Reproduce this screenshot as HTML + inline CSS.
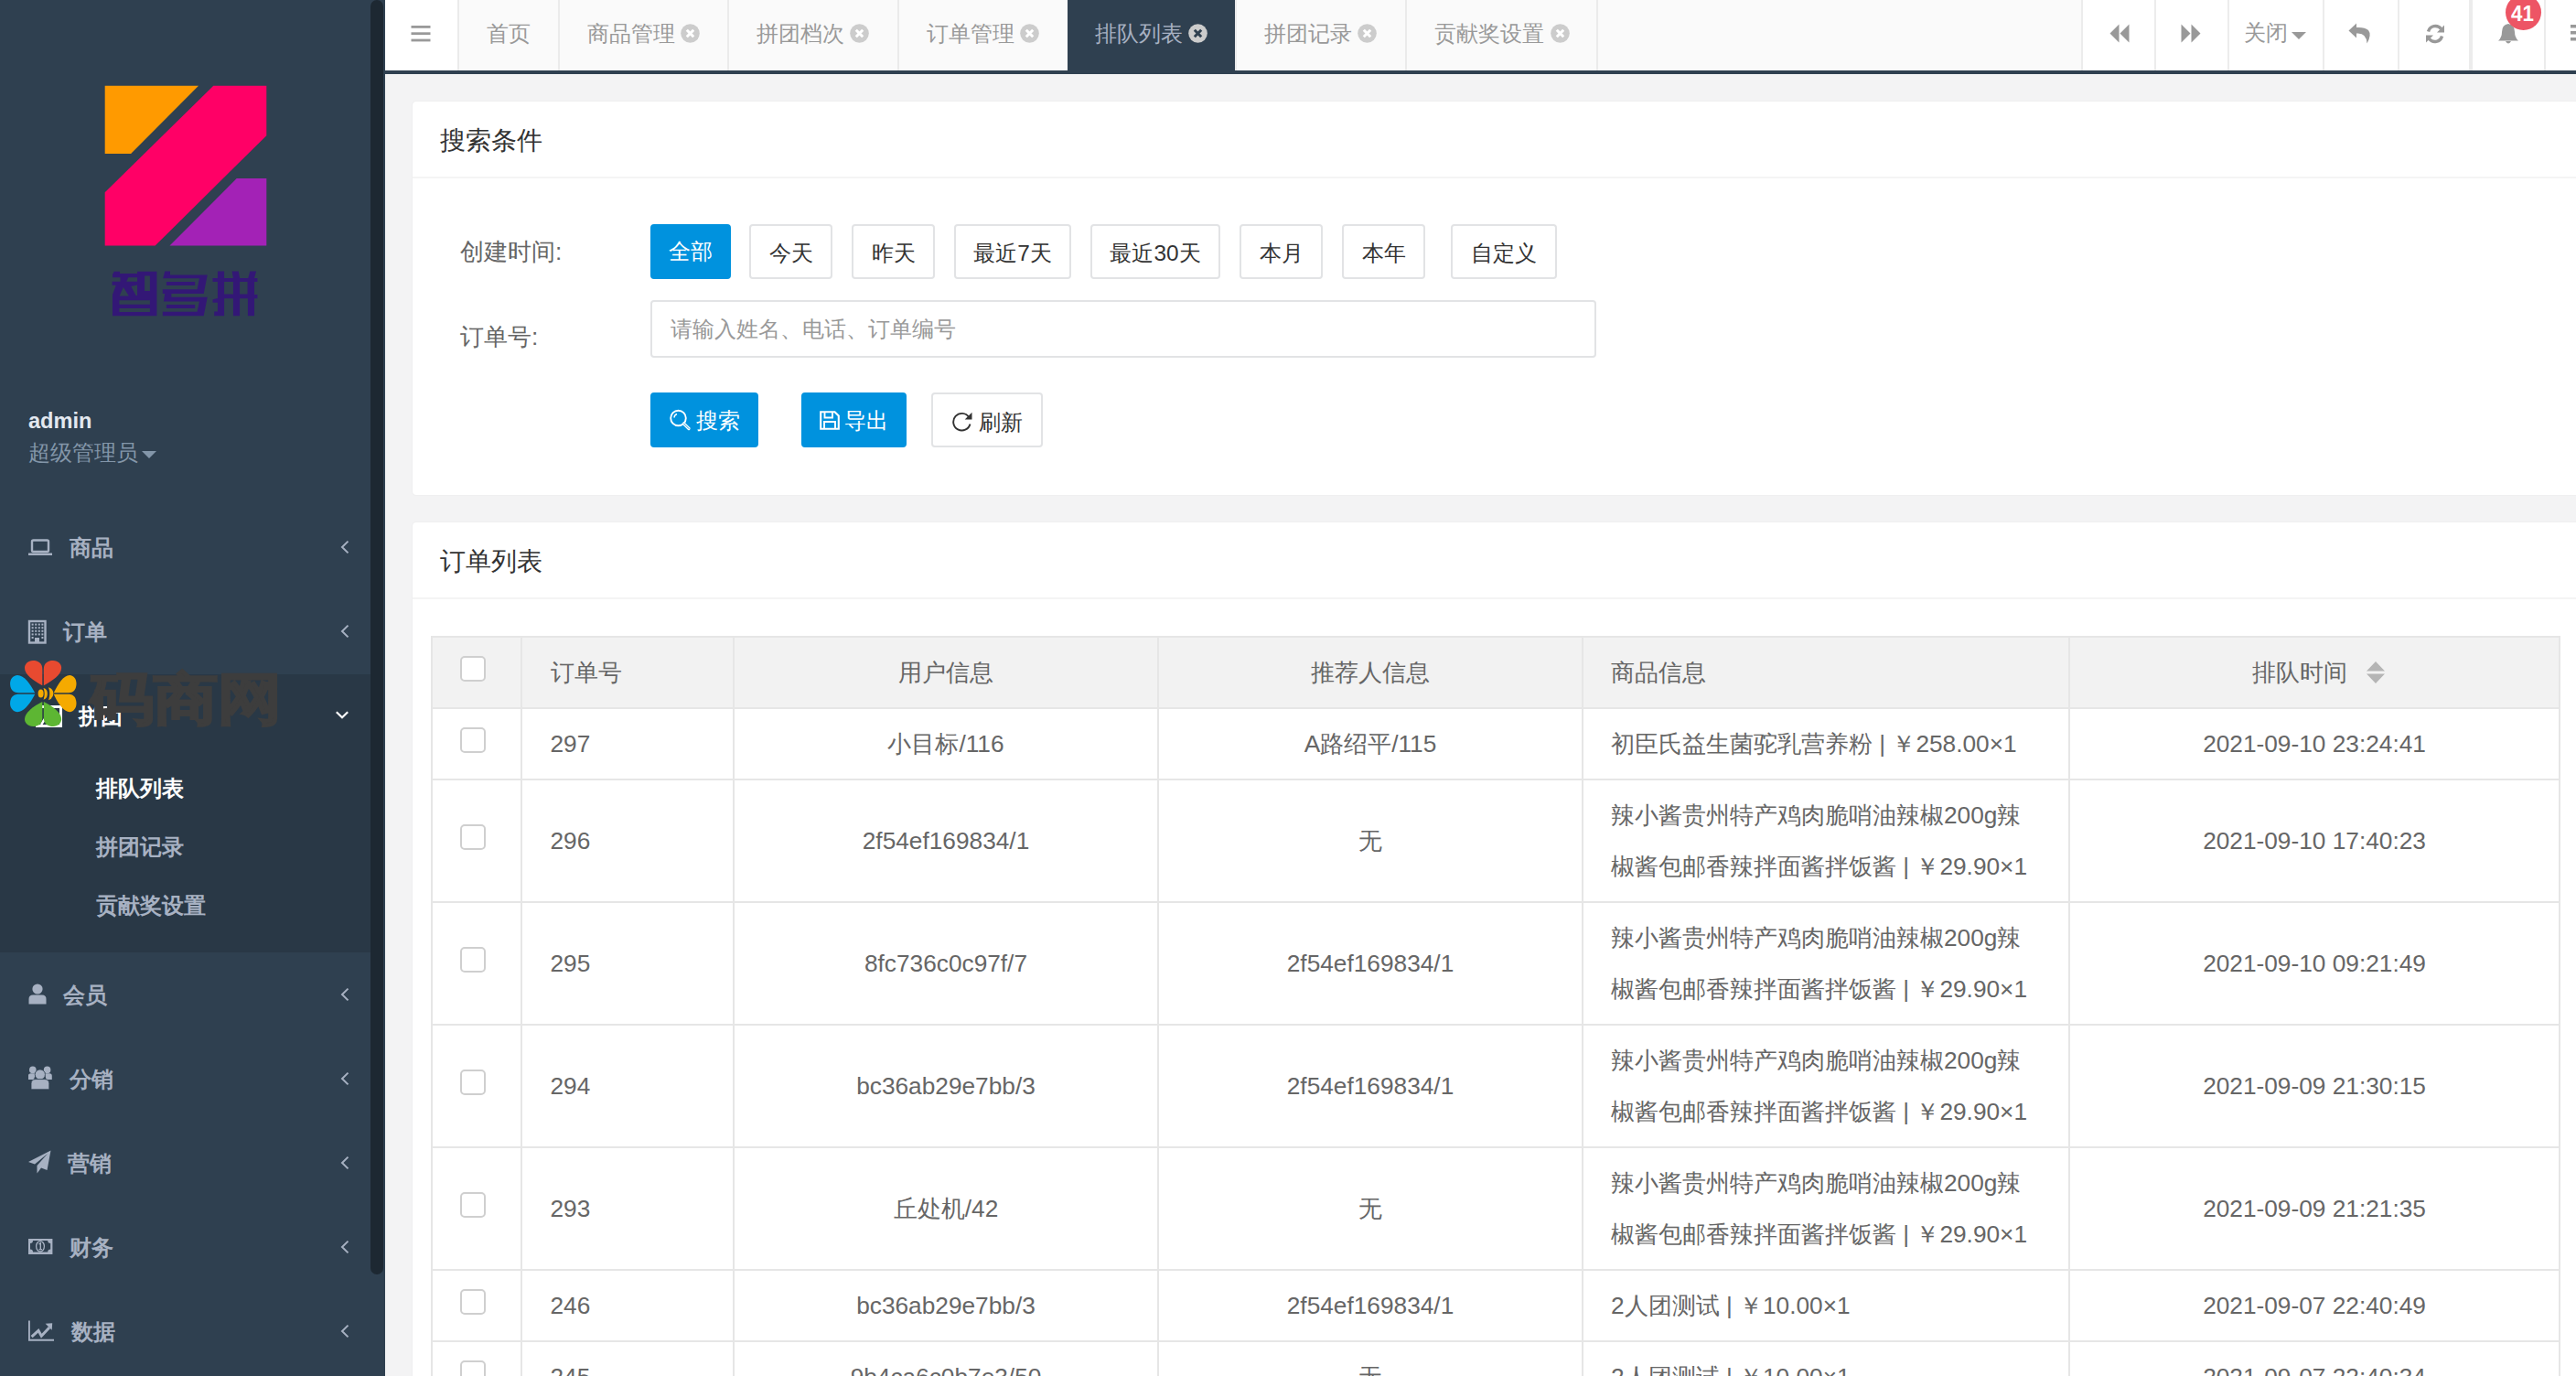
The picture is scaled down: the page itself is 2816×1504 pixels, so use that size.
<!DOCTYPE html>
<html><head><meta charset="utf-8">
<style>
*{box-sizing:border-box;margin:0;padding:0}
html,body{width:2816px;height:1504px;overflow:hidden;background:#f3f3f4;font-family:"Liberation Sans",sans-serif}
.abs{position:absolute}
.t{position:absolute;white-space:nowrap;line-height:1}
#side{position:absolute;left:0;top:0;width:421px;height:1504px;background:#2f4050;overflow:hidden}
#thumb{position:absolute;left:405px;top:0;width:14px;height:1393px;background:#1d2832;border-radius:7px}
.mi{position:absolute;left:0;width:405px;height:92px;color:#a7b1c2;font-weight:bold;font-size:24.4px}
.mi .lbl{position:absolute;top:32px;line-height:28px}
.mi .ic{position:absolute;left:31px}
.mi .chev{position:absolute;left:372px;top:36px;width:10px;height:18px}
.sub{position:absolute;left:105px;font-size:24.4px;font-weight:bold;color:#a7b1c2;line-height:28px}
#top{position:absolute;left:421px;top:0;width:2395px;height:77px;background:#fafafa}
#topline{position:absolute;left:421px;top:77px;width:2395px;height:4px;background:#2f4050}
.tab{position:absolute;top:0;height:77px;border-right:2px solid #ececec;color:#999;font-size:24.4px}
.tab .tx{position:absolute;top:24px;line-height:28px;white-space:nowrap}
.cls{position:absolute;top:26px;width:21px;height:21px;border-radius:50%;background:#ccc}
.tool{position:absolute;top:0;height:77px;background:#fff;border-left:2px solid #ececec}
.card{position:absolute;background:#fff;border-radius:4px;box-shadow:0 0 2px rgba(0,0,0,.07)}
.ctitle{position:absolute;left:30px;font-size:28px;color:#333;line-height:32px}
.btn{position:absolute;height:60px;border:2px solid #e2e3e5;border-radius:4px;background:#fff;color:#333;font-size:24.4px;line-height:59px;text-align:center}
.btn.pri{background:#0092de;border-color:#0092de;color:#fff}
.lab{position:absolute;left:503px;font-size:26.25px;color:#666;line-height:30px}
.hl{position:absolute;background:#e6e6e6}
.cell{position:absolute;font-size:26.25px;color:#666;line-height:56px;white-space:nowrap}
.cb{position:absolute;left:503px;width:28px;height:28px;border:2px solid #cfcfcf;border-radius:5px;background:#fff}
</style></head>
<body>
<div id="side">
  <div id="thumb"></div>
  <svg class="abs" style="left:0;top:0" width="405" height="360" viewBox="0 0 405 360">
    <polygon fill="#ff9a00" points="114.7,93.8 217,93.8 143.1,167.9 114.7,167.9"/>
    <polygon fill="#ff0066" points="233.3,93.8 291.3,93.8 291.3,148.2 169.6,268.6 114.7,268.6 114.7,210.2"/>
    <polygon fill="#a322b6" points="258.7,195 291.3,195 291.3,268.6 185.5,268.6"/>
    <g transform="translate(115,290) scale(0.067935)" fill="#331776">
      <path fill-rule="evenodd" d="M140,98 L236,98 L236,132 L516,132 L516,98 L830,98 L830,812 L118,812 L118,470 L174,321 L112,321 L112,262 L243,262 L243,194 L119,194 L119,132 L131,132 Z M373,194 L516,194 L516,262 L342,262 Z M634,169 L720,169 L720,411 L634,411 Z M292,352 L381,494 L230,494 Z M416,338 L516,318 L516,487 L495,487 Z M227,563 L720,563 L720,628 L227,628 Z M227,693 L720,693 L720,749 L227,749 Z"/>
      <path d="M960,95 L1045,95 L1045,155 L1645,155 L1585,455 L1065,455 L1065,510 L1645,510 L1585,815 L925,815 L925,748 L1480,748 L1515,580 L940,580 L960,455 L925,455 L925,385 L1480,385 L1515,210 L930,210 Z M985,265 L1445,265 L1445,325 L985,325 Z M985,633 L1445,633 L1445,692 L985,692 Z"/>
      <path fill-rule="evenodd" d="M1810,95 L1915,95 L1915,205 L2060,205 L2040,95 L2145,95 L2165,205 L2300,205 L2330,95 L2430,95 L2400,205 L2450,205 L2450,265 L2400,265 L2400,470 L2450,470 L2450,535 L2400,535 L2400,815 L2295,815 L2295,535 L2165,535 L2165,815 L2060,815 L2060,535 L1915,535 L1915,815 L1755,815 L1755,745 L1810,745 L1810,600 L1730,600 L1730,550 L1810,530 L1810,265 L1730,265 L1730,205 L1810,205 Z M1915,265 L2060,265 L2060,465 L1915,465 Z M2165,265 L2290,265 L2290,465 L2165,465 Z"/>
    </g>
  </svg>
  <div class="t" style="left:31px;top:449px;font-size:23.6px;font-weight:bold;color:#e3e8ef">admin</div>
  <div class="t" style="left:31px;top:483px;font-size:24.4px;color:#8396a9">超级管理员</div>
  <div class="abs" style="left:155px;top:493px;width:0;height:0;border-left:8px solid transparent;border-right:8px solid transparent;border-top:8px solid #8396a9"></div>
  <div class="abs" style="left:0;top:737px;width:405px;height:304px;background:#293846"></div>
  <svg class="abs" style="left:30px;top:589px" width="28" height="19" viewBox="0 0 28 19"><rect x="5" y="1.5" width="18" height="12.5" rx="1.5" fill="none" stroke="#a7b1c2" stroke-width="2.4"/><path d="M1,15.5 H27 V18 H1 Z" fill="#a7b1c2"/></svg>
  <div class="t" style="left:76px;top:587.2px;font-size:24.4px;font-weight:bold;color:#a7b1c2">商品</div>
  <svg class="abs" style="left:371px;top:589px" width="12" height="18" viewBox="0 0 12 18"><path d="M9.5,2.6 L3,9 L9.5,15.4" fill="none" stroke="#a7b1c2" stroke-width="2"/></svg>
  <svg class="abs" style="left:30px;top:677px" width="21" height="27" viewBox="0 0 21 27"><rect x="2" y="2" width="17.5" height="23.5" fill="none" stroke="#a7b1c2" stroke-width="2.4"/><rect x="4.6" y="4.6" width="2" height="2" fill="#a7b1c2"/><rect x="8.2" y="4.6" width="2" height="2" fill="#a7b1c2"/><rect x="11.8" y="4.6" width="2" height="2" fill="#a7b1c2"/><rect x="15.4" y="4.6" width="2" height="2" fill="#a7b1c2"/><rect x="4.6" y="8.2" width="2" height="2" fill="#a7b1c2"/><rect x="8.2" y="8.2" width="2" height="2" fill="#a7b1c2"/><rect x="11.8" y="8.2" width="2" height="2" fill="#a7b1c2"/><rect x="15.4" y="8.2" width="2" height="2" fill="#a7b1c2"/><rect x="4.6" y="11.8" width="2" height="2" fill="#a7b1c2"/><rect x="8.2" y="11.8" width="2" height="2" fill="#a7b1c2"/><rect x="11.8" y="11.8" width="2" height="2" fill="#a7b1c2"/><rect x="15.4" y="11.8" width="2" height="2" fill="#a7b1c2"/><rect x="4.6" y="15.4" width="2" height="2" fill="#a7b1c2"/><rect x="8.2" y="15.4" width="2" height="2" fill="#a7b1c2"/><rect x="11.8" y="15.4" width="2" height="2" fill="#a7b1c2"/><rect x="15.4" y="15.4" width="2" height="2" fill="#a7b1c2"/><rect x="4.6" y="19" width="2" height="2" fill="#a7b1c2"/><rect x="15.4" y="19" width="2" height="2" fill="#a7b1c2"/><rect x="8" y="20" width="5" height="5" fill="#a7b1c2"/></svg>
  <div class="t" style="left:69px;top:679.0px;font-size:24.4px;font-weight:bold;color:#a7b1c2">订单</div>
  <svg class="abs" style="left:371px;top:681px" width="12" height="18" viewBox="0 0 12 18"><path d="M9.5,2.6 L3,9 L9.5,15.4" fill="none" stroke="#a7b1c2" stroke-width="2"/></svg>
    <svg class="abs" style="left:39px;top:771px" width="29" height="24" viewBox="0 0 29 24"><rect x="1.5" y="1.5" width="26" height="21" fill="none" stroke="#fff" stroke-width="3"/><path d="M6,21 L14.5,8 L23,21" fill="none" stroke="#fff" stroke-width="2.6"/></svg>
  <div class="t" style="left:85.7px;top:770.5px;font-size:24.4px;font-weight:bold;color:#fff">拼团</div>
  <svg class="abs" style="left:366px;top:776px" width="16" height="11" viewBox="0 0 16 11"><path d="M1.8,2.2 L8,8.2 L14.2,2.2" fill="none" stroke="#fff" stroke-width="2.2"/></svg>
  <div class="t" style="left:105px;top:849.5px;font-size:24.4px;font-weight:bold;color:#fff">排队列表</div>
  <div class="t" style="left:105px;top:913.5px;font-size:24.4px;font-weight:bold;color:#a7b1c2">拼团记录</div>
  <div class="t" style="left:105px;top:977.5px;font-size:24.4px;font-weight:bold;color:#a7b1c2">贡献奖设置</div>
  <div class="t" style="left:98px;top:734px;font-size:61px;font-weight:900;color:#3d3d3d;-webkit-text-stroke:2.4px #3d3d3d;transform:scaleX(1.15);transform-origin:0 0">码商网</div>
  <svg class="abs" style="left:0;top:700px" width="100" height="110" viewBox="0 700 100 110"><path d="M46.30,749.20 L46.30,731.55 C46.30,724.55 41.55,722.05 36.05,722.05 C30.55,722.05 26.95,726.05 26.95,730.05 C26.95,737.55 36.55,744.05 46.30,749.20 Z" fill="#e84a30"/><path d="M47.80,749.20 L47.80,731.55 C47.80,724.55 52.55,722.05 58.05,722.05 C63.55,722.05 67.15,726.05 67.15,730.05 C67.15,737.55 57.55,744.05 47.80,749.20 Z" fill="#e84a30"/><path d="M46.30,766.90 L46.30,784.55 C46.30,791.55 41.55,794.05 36.05,794.05 C30.55,794.05 26.95,790.05 26.95,786.05 C26.95,778.55 36.55,772.05 46.30,766.90 Z" fill="#5db633"/><path d="M47.80,766.90 L47.80,784.55 C47.80,791.55 52.55,794.05 58.05,794.05 C63.55,794.05 67.15,790.05 67.15,786.05 C67.15,778.55 57.55,772.05 47.80,766.90 Z" fill="#5db633"/><path d="M38.20,757.30 L20.55,757.30 C13.55,757.30 11.05,752.55 11.05,747.05 C11.05,741.55 15.05,737.95 19.05,737.95 C26.55,737.95 33.05,747.55 38.20,757.30 Z" fill="#00a8e8"/><path d="M38.20,758.80 L20.55,758.80 C13.55,758.80 11.05,763.55 11.05,769.05 C11.05,774.55 15.05,778.15 19.05,778.15 C26.55,778.15 33.05,768.55 38.20,758.80 Z" fill="#00a8e8"/><path d="M58.70,757.30 L74.81,757.30 C81.21,757.30 83.49,752.55 83.49,747.05 C83.49,741.55 79.84,737.95 76.18,737.95 C69.34,737.95 63.40,747.55 58.70,757.30 Z" fill="#f5aa00"/><path d="M58.70,758.80 L74.81,758.80 C81.21,758.80 83.49,763.55 83.49,769.05 C83.49,774.55 79.84,778.15 76.18,778.15 C69.34,778.15 63.40,768.55 58.70,758.80 Z" fill="#f5aa00"/><ellipse cx="44.6" cy="758" rx="3" ry="4.6" fill="#f5aa00"/><path d="M47.5,752 Q51.8,752.8 51.8,758 Q51.8,763.6 47.5,764.8 Q49.9,758 47.5,752 Z" fill="#f5aa00"/><path d="M53,751.3 Q58.3,753 58.4,758 Q58.3,763.4 53,765.3 Q55.6,758 53,751.3 Z" fill="#f5aa00"/></svg>
  <svg class="abs" style="left:31px;top:1075px" width="20" height="23" viewBox="0 0 20 23"><circle cx="10" cy="6" r="5.6" fill="#a7b1c2"/><path d="M0.5,22.5 V17 Q0.5,12.5 5,12.5 H15 Q19.5,12.5 19.5,17 V22.5 Z" fill="#a7b1c2"/></svg>
  <div class="t" style="left:69px;top:1075.5px;font-size:24.4px;font-weight:bold;color:#a7b1c2">会员</div>
  <svg class="abs" style="left:371px;top:1078px" width="12" height="18" viewBox="0 0 12 18"><path d="M9.5,2.6 L3,9 L9.5,15.4" fill="none" stroke="#a7b1c2" stroke-width="2"/></svg>
  <svg class="abs" style="left:31px;top:1165px" width="27" height="27" viewBox="0 0 27 27"><circle cx="4.8" cy="4.4" r="3.8" fill="#a7b1c2"/><circle cx="20.6" cy="4.4" r="3.8" fill="#a7b1c2"/><path d="M-0.2,15 V11 Q-0.2,8.2 2.6,8.2 H8 L6,15 Z M25.8,15 V11 Q25.8,8.2 23,8.2 H17.6 L19.6,15 Z" fill="#a7b1c2"/><circle cx="12.8" cy="9.5" r="5.6" fill="#a7b1c2" stroke="#2f4050" stroke-width="0.8"/><path d="M3,25.8 V19.5 Q3,14.6 8,14.6 H17.8 Q22.8,14.6 22.8,19.5 V25.8 Z" fill="#a7b1c2" stroke="#2f4050" stroke-width="0.8"/></svg>
  <div class="t" style="left:76px;top:1167.5px;font-size:24.4px;font-weight:bold;color:#a7b1c2">分销</div>
  <svg class="abs" style="left:371px;top:1170px" width="12" height="18" viewBox="0 0 12 18"><path d="M9.5,2.6 L3,9 L9.5,15.4" fill="none" stroke="#a7b1c2" stroke-width="2"/></svg>
  <svg class="abs" style="left:31px;top:1257px" width="25" height="26" viewBox="0 0 25 26"><path d="M24.5,0.5 L0,13 L7,15.5 L21,4 L9.5,17 V25.5 L14,19.5 L20.5,22 Z" fill="#a7b1c2"/></svg>
  <div class="t" style="left:74px;top:1259.5px;font-size:24.4px;font-weight:bold;color:#a7b1c2">营销</div>
  <svg class="abs" style="left:371px;top:1262px" width="12" height="18" viewBox="0 0 12 18"><path d="M9.5,2.6 L3,9 L9.5,15.4" fill="none" stroke="#a7b1c2" stroke-width="2"/></svg>
  <svg class="abs" style="left:31px;top:1353px" width="27" height="19" viewBox="0 0 27 19"><rect x="0" y="1" width="26.4" height="17" fill="#a7b1c2"/><path d="M5,3 H21.2 A3,3 0 0 0 24.2,6 V12.6 A3,3 0 0 0 21.2,15.6 H5 A3,3 0 0 0 2,12.6 V6 A3,3 0 0 0 5,3 Z" fill="#2f4050"/><ellipse cx="13" cy="9.3" rx="4.4" ry="5.7" fill="none" stroke="#a7b1c2" stroke-width="1.3"/><path d="M11.5,7 L13.3,5.8 V12.6 M11.6,12.6 H15" fill="none" stroke="#a7b1c2" stroke-width="1.4"/></svg>
  <div class="t" style="left:76px;top:1351.5px;font-size:24.4px;font-weight:bold;color:#a7b1c2">财务</div>
  <svg class="abs" style="left:371px;top:1354px" width="12" height="18" viewBox="0 0 12 18"><path d="M9.5,2.6 L3,9 L9.5,15.4" fill="none" stroke="#a7b1c2" stroke-width="2"/></svg>
  <svg class="abs" style="left:31px;top:1443px" width="29" height="24" viewBox="0 0 29 24"><path d="M0.9,0.5 V21.8 H28" fill="none" stroke="#a7b1c2" stroke-width="1.9"/><path d="M3.6,18.2 L11,11.3 L14.3,17.3 L23,8" fill="none" stroke="#a7b1c2" stroke-width="3"/><path d="M18.6,3.8 L26.2,3.2 L25.7,10.8 Z" fill="#a7b1c2"/></svg>
  <div class="t" style="left:77.5px;top:1443.5px;font-size:24.4px;font-weight:bold;color:#a7b1c2">数据</div>
  <svg class="abs" style="left:371px;top:1446px" width="12" height="18" viewBox="0 0 12 18"><path d="M9.5,2.6 L3,9 L9.5,15.4" fill="none" stroke="#a7b1c2" stroke-width="2"/></svg>
</div>
<div id="top"></div>
<div id="topline"></div>
<div class="abs" style="left:421px;top:0;width:79px;height:77px;background:#fff"></div>
<svg class="abs" style="left:449px;top:27px" width="22" height="19" viewBox="0 0 22 19"><rect x="0.5" y="1" width="21" height="2.8" fill="#999"/><rect x="0.5" y="8.3" width="21" height="2.8" fill="#999"/><rect x="0.5" y="15.6" width="21" height="2.8" fill="#999"/></svg>
<div class="abs" style="left:499.5px;top:0;width:2px;height:77px;background:#ebebeb"></div>
<div class="t" style="left:532px;top:24.5px;font-size:24.4px;color:#999">首页</div>
<div class="abs" style="left:609.5px;top:0;width:2px;height:77px;background:#ebebeb"></div>
<div class="t" style="left:642px;top:24.5px;font-size:24.4px;color:#999">商品管理</div>
<svg class="abs" style="left:744.1px;top:26px" width="21" height="21" viewBox="0 0 21 21"><circle cx="10.5" cy="10.5" r="10.3" fill="#ccc"/><path d="M6.8,6.8 L14.2,14.2 M14.2,6.8 L6.8,14.2" stroke="#fff" stroke-width="3"/></svg>
<div class="abs" style="left:794.5px;top:0;width:2px;height:77px;background:#ebebeb"></div>
<div class="t" style="left:827px;top:24.5px;font-size:24.4px;color:#999">拼团档次</div>
<svg class="abs" style="left:929.1px;top:26px" width="21" height="21" viewBox="0 0 21 21"><circle cx="10.5" cy="10.5" r="10.3" fill="#ccc"/><path d="M6.8,6.8 L14.2,14.2 M14.2,6.8 L6.8,14.2" stroke="#fff" stroke-width="3"/></svg>
<div class="abs" style="left:980.5px;top:0;width:2px;height:77px;background:#ebebeb"></div>
<div class="t" style="left:1013px;top:24.5px;font-size:24.4px;color:#999">订单管理</div>
<svg class="abs" style="left:1115.1px;top:26px" width="21" height="21" viewBox="0 0 21 21"><circle cx="10.5" cy="10.5" r="10.3" fill="#ccc"/><path d="M6.8,6.8 L14.2,14.2 M14.2,6.8 L6.8,14.2" stroke="#fff" stroke-width="3"/></svg>
<div class="abs" style="left:1167px;top:0;width:183px;height:77px;background:#2f4050"></div>
<div class="t" style="left:1197px;top:24.5px;font-size:24.4px;color:#a7b1c2">排队列表</div>
<svg class="abs" style="left:1299.1px;top:26px" width="21" height="21" viewBox="0 0 21 21"><circle cx="10.5" cy="10.5" r="10.3" fill="#cccccc"/><path d="M6.8,6.8 L14.2,14.2 M14.2,6.8 L6.8,14.2" stroke="#2f4050" stroke-width="3"/></svg>
<div class="abs" style="left:1349.5px;top:0;width:2px;height:77px;background:#ebebeb"></div>
<div class="t" style="left:1382px;top:24.5px;font-size:24.4px;color:#999">拼团记录</div>
<svg class="abs" style="left:1484.1px;top:26px" width="21" height="21" viewBox="0 0 21 21"><circle cx="10.5" cy="10.5" r="10.3" fill="#ccc"/><path d="M6.8,6.8 L14.2,14.2 M14.2,6.8 L6.8,14.2" stroke="#fff" stroke-width="3"/></svg>
<div class="abs" style="left:1535.5px;top:0;width:2px;height:77px;background:#ebebeb"></div>
<div class="t" style="left:1568px;top:24.5px;font-size:24.4px;color:#999">贡献奖设置</div>
<svg class="abs" style="left:1694.5px;top:26px" width="21" height="21" viewBox="0 0 21 21"><circle cx="10.5" cy="10.5" r="10.3" fill="#ccc"/><path d="M6.8,6.8 L14.2,14.2 M14.2,6.8 L6.8,14.2" stroke="#fff" stroke-width="3"/></svg>
<div class="abs" style="left:1745px;top:0;width:2px;height:77px;background:#ebebeb"></div>
<div class="abs" style="left:2275px;top:0;width:541px;height:77px;background:#fff"></div>
<div class="abs" style="left:2275px;top:0;width:2px;height:77px;background:#ececec"></div>
<div class="abs" style="left:2355px;top:0;width:2px;height:77px;background:#ececec"></div>
<div class="abs" style="left:2435px;top:0;width:2px;height:77px;background:#ececec"></div>
<div class="abs" style="left:2539px;top:0;width:2px;height:77px;background:#ececec"></div>
<div class="abs" style="left:2621px;top:0;width:2px;height:77px;background:#ececec"></div>
<div class="abs" style="left:2699px;top:0;width:4px;height:77px;background:#ececec"></div>
<div class="abs" style="left:2781px;top:0;width:2px;height:77px;background:#ececec"></div>
<svg class="abs" style="left:2306px;top:26px" width="22" height="21" viewBox="0 0 22 21"><path d="M10.5,0.5 V20.5 L0.5,10.5 Z M21.5,0.5 V20.5 L11.5,10.5 Z" fill="#999"/></svg>
<svg class="abs" style="left:2384px;top:26px" width="22" height="21" viewBox="0 0 22 21"><path d="M0.5,0.5 V20.5 L10.5,10.5 Z M11.5,0.5 V20.5 L21.5,10.5 Z" fill="#999"/></svg>
<div class="t" style="left:2453px;top:24px;font-size:24.4px;color:#999">关闭</div>
<svg class="abs" style="left:2505px;top:35px" width="16" height="8" viewBox="0 0 16 8"><path d="M0,0 H16 L8,8 Z" fill="#999"/></svg>
<svg class="abs" style="left:2567px;top:25px" width="26" height="23" viewBox="0 0 26 23"><path d="M9,0.5 L0.5,8.5 L9,16.5 V11.5 Q20,10.5 20.5,22.5 Q26,13 22,8 Q18,4.5 9,5 Z" fill="#999"/></svg>
<svg class="abs" style="left:2651px;top:26px" width="22" height="22" viewBox="0 0 22 22"><path d="M3.5,8.5 A8,8 0 0 1 17.5,5.5" fill="none" stroke="#999" stroke-width="3.4"/><path d="M21,1.5 V9.5 H13 Z" fill="#999"/><path d="M18.5,13.5 A8,8 0 0 1 4.5,16.5" fill="none" stroke="#999" stroke-width="3.4"/><path d="M1,20.5 V12.5 H9 Z" fill="#999"/></svg>
<svg class="abs" style="left:2730px;top:25px" width="24" height="24" viewBox="0 0 24 24"><path d="M12,1 Q19,2 19,10 Q19,16 23,19.5 H1 Q5,16 5,10 Q5,2 12,1 Z" fill="#999"/><path d="M9,20 Q12,25 15,20 Z" fill="#999"/></svg>
<div class="abs" style="left:2739px;top:-6px;width:39px;height:39px;border-radius:50%;background:#ed5565"></div>
<div class="t" style="left:2737.5px;top:2.5px;width:39px;text-align:center;font-size:24px;font-weight:bold;color:#fff;transform:scaleX(0.93)">41</div>
<svg class="abs" style="left:2809px;top:26px" width="10" height="20" viewBox="0 0 10 20"><rect x="1" y="1" width="9" height="3.5" fill="#999"/><rect x="1" y="8" width="9" height="3.5" fill="#999"/><rect x="1" y="15" width="9" height="3.5" fill="#999"/></svg>
<div class="card" style="left:451px;top:111px;width:2400px;height:430px"></div>
<div class="t" style="left:481px;top:139.5px;font-size:28px;color:#333">搜索条件</div>
<div class="abs" style="left:451px;top:193px;width:2400px;height:2px;background:#f4f4f4"></div>
<div class="t" style="left:503px;top:262px;font-size:26.25px;color:#666">创建时间:</div>
<div class="t" style="left:503px;top:354.5px;font-size:26.25px;color:#666">订单号:</div>
<div class="btn pri" style="left:711px;top:245px;width:88px;height:60px;line-height:56px">全部</div>
<div class="btn" style="left:819px;top:245px;width:91.0px;height:60px;line-height:59px">今天</div>
<div class="btn" style="left:931px;top:245px;width:91.0px;height:60px;line-height:59px">昨天</div>
<div class="btn" style="left:1043px;top:245px;width:128.0px;height:60px;line-height:59px">最近7天</div>
<div class="btn" style="left:1192px;top:245px;width:142.0px;height:60px;line-height:59px">最近30天</div>
<div class="btn" style="left:1355px;top:245px;width:91.0px;height:60px;line-height:59px">本月</div>
<div class="btn" style="left:1467px;top:245px;width:91.0px;height:60px;line-height:59px">本年</div>
<div class="btn" style="left:1586px;top:245px;width:115.5px;height:60px;line-height:59px">自定义</div>
<div class="abs" style="left:711px;top:327.5px;width:1034px;height:63px;border:2px solid #e2e3e5;border-radius:4px;background:#fff"></div>
<div class="t" style="left:733px;top:348px;font-size:24.4px;color:#999">请输入姓名、电话、订单编号</div>
<div class="btn pri" style="left:711px;top:429px;width:118px;height:60px"></div>
<svg class="abs" style="left:731px;top:447px" width="25" height="24" viewBox="0 0 25 24"><circle cx="10.5" cy="10" r="8.3" fill="none" stroke="#fff" stroke-width="1.9"/><path d="M6,9.5 A4.5,4.5 0 0 1 9,5.5" fill="none" stroke="#fff" stroke-width="1.4"/><path d="M16.5,16 L22,21.5" stroke="#fff" stroke-width="3.2" stroke-linecap="round"/><path d="M16.5,16 L22,21.5" stroke="#0092de" stroke-width="0.9" stroke-linecap="round"/></svg>
<div class="t" style="left:761px;top:448px;font-size:24.4px;color:#fff">搜索</div>
<div class="btn pri" style="left:876px;top:429px;width:115px;height:60px"></div>
<svg class="abs" style="left:895.5px;top:448.5px" width="22" height="21" viewBox="0 0 22 21"><path d="M1.2,1.2 H16.5 L20.8,5.5 V19.8 H1.2 Z" fill="none" stroke="#fff" stroke-width="2.1"/><path d="M5.5,1.2 V7.5 H14 V1.2" fill="none" stroke="#fff" stroke-width="1.9"/><path d="M5,19.8 V12 H17 V19.8" fill="none" stroke="#fff" stroke-width="1.9"/></svg>
<div class="t" style="left:923px;top:448px;font-size:24.4px;color:#fff">导出</div>
<div class="btn" style="left:1018px;top:429px;width:122px;height:60px"></div>
<svg class="abs" style="left:1040px;top:450px" width="24" height="22" viewBox="0 0 24 22"><path d="M19.2,6 A9.3,9.3 0 1 0 20.5,13.5" fill="none" stroke="#333" stroke-width="1.9"/><path d="M22.5,0.8 V8.6 H14.7 Z" fill="#333"/></svg>
<div class="t" style="left:1070px;top:449.5px;font-size:24.4px;color:#333">刷新</div>
<div class="card" style="left:451px;top:571px;width:2400px;height:1000px"></div>
<div class="t" style="left:481px;top:599.5px;font-size:28px;color:#333">订单列表</div>
<div class="abs" style="left:451px;top:653px;width:2400px;height:2px;background:#f4f4f4"></div>
<div class="abs" style="left:471px;top:695px;width:2328px;height:80px;background:#f2f2f2"></div>
<div class="hl" style="left:471px;top:695px;width:2328px;height:2px"></div>
<div class="hl" style="left:471px;top:773px;width:2328px;height:2px"></div>
<div class="hl" style="left:471px;top:851px;width:2328px;height:2px"></div>
<div class="hl" style="left:471px;top:985px;width:2328px;height:2px"></div>
<div class="hl" style="left:471px;top:1119px;width:2328px;height:2px"></div>
<div class="hl" style="left:471px;top:1253px;width:2328px;height:2px"></div>
<div class="hl" style="left:471px;top:1387px;width:2328px;height:2px"></div>
<div class="hl" style="left:471px;top:1465px;width:2328px;height:2px"></div>
<div class="hl" style="left:471px;top:695px;width:2px;height:820px"></div>
<div class="hl" style="left:569px;top:695px;width:2px;height:820px"></div>
<div class="hl" style="left:801px;top:695px;width:2px;height:820px"></div>
<div class="hl" style="left:1265px;top:695px;width:2px;height:820px"></div>
<div class="hl" style="left:1729px;top:695px;width:2px;height:820px"></div>
<div class="hl" style="left:2261px;top:695px;width:2px;height:820px"></div>
<div class="hl" style="left:2797px;top:695px;width:2px;height:820px"></div>
<div class="cb" style="top:717px"></div>
<div class="t" style="left:601.5px;top:722px;font-size:26.25px;color:#666">订单号</div>
<div class="t" style="left:804.0px;top:722px;width:460px;text-align:center;font-size:26.25px;color:#666">用户信息</div>
<div class="t" style="left:1268.0px;top:722px;width:460px;text-align:center;font-size:26.25px;color:#666">推荐人信息</div>
<div class="t" style="left:1761px;top:722px;font-size:26.25px;color:#666">商品信息</div>
<div class="t" style="left:2461.5px;top:722px;font-size:26.25px;color:#666">排队时间</div>
<svg class="abs" style="left:2587px;top:723px" width="20" height="24" viewBox="0 0 20 24"><path d="M10,0 L20,10.5 H0 Z M0,13.5 H20 L10,24 Z" fill="#b5b5b5"/></svg>
<div class="cb" style="top:795px"></div>
<div class="t" style="left:601.5px;top:800px;font-size:26.25px;color:#666">297</div>
<div class="t" style="left:804.0px;top:800px;width:460px;text-align:center;font-size:26.25px;color:#666">小目标/116</div>
<div class="t" style="left:1268.0px;top:800px;width:460px;text-align:center;font-size:26.25px;color:#666">A路绍平/115</div>
<div class="t" style="left:1761px;top:800px;font-size:26.25px;color:#666">初臣氏益生菌驼乳营养粉 | ￥258.00×1</div>
<div class="t" style="left:2300.0px;top:800px;width:460px;text-align:center;font-size:26.25px;color:#666">2021-09-10 23:24:41</div>
<div class="cb" style="top:901px"></div>
<div class="t" style="left:601.5px;top:906px;font-size:26.25px;color:#666">296</div>
<div class="t" style="left:804.0px;top:906px;width:460px;text-align:center;font-size:26.25px;color:#666">2f54ef169834/1</div>
<div class="t" style="left:1268.0px;top:906px;width:460px;text-align:center;font-size:26.25px;color:#666">无</div>
<div class="t" style="left:1761px;top:878.2px;font-size:26.25px;color:#666">辣小酱贵州特产鸡肉脆哨油辣椒200g辣</div>
<div class="t" style="left:1761px;top:933.8px;font-size:26.25px;color:#666">椒酱包邮香辣拌面酱拌饭酱 | ￥29.90×1</div>
<div class="t" style="left:2300.0px;top:906px;width:460px;text-align:center;font-size:26.25px;color:#666">2021-09-10 17:40:23</div>
<div class="cb" style="top:1035px"></div>
<div class="t" style="left:601.5px;top:1040px;font-size:26.25px;color:#666">295</div>
<div class="t" style="left:804.0px;top:1040px;width:460px;text-align:center;font-size:26.25px;color:#666">8fc736c0c97f/7</div>
<div class="t" style="left:1268.0px;top:1040px;width:460px;text-align:center;font-size:26.25px;color:#666">2f54ef169834/1</div>
<div class="t" style="left:1761px;top:1012.2px;font-size:26.25px;color:#666">辣小酱贵州特产鸡肉脆哨油辣椒200g辣</div>
<div class="t" style="left:1761px;top:1067.8px;font-size:26.25px;color:#666">椒酱包邮香辣拌面酱拌饭酱 | ￥29.90×1</div>
<div class="t" style="left:2300.0px;top:1040px;width:460px;text-align:center;font-size:26.25px;color:#666">2021-09-10 09:21:49</div>
<div class="cb" style="top:1169px"></div>
<div class="t" style="left:601.5px;top:1174px;font-size:26.25px;color:#666">294</div>
<div class="t" style="left:804.0px;top:1174px;width:460px;text-align:center;font-size:26.25px;color:#666">bc36ab29e7bb/3</div>
<div class="t" style="left:1268.0px;top:1174px;width:460px;text-align:center;font-size:26.25px;color:#666">2f54ef169834/1</div>
<div class="t" style="left:1761px;top:1146.2px;font-size:26.25px;color:#666">辣小酱贵州特产鸡肉脆哨油辣椒200g辣</div>
<div class="t" style="left:1761px;top:1201.8px;font-size:26.25px;color:#666">椒酱包邮香辣拌面酱拌饭酱 | ￥29.90×1</div>
<div class="t" style="left:2300.0px;top:1174px;width:460px;text-align:center;font-size:26.25px;color:#666">2021-09-09 21:30:15</div>
<div class="cb" style="top:1303px"></div>
<div class="t" style="left:601.5px;top:1308px;font-size:26.25px;color:#666">293</div>
<div class="t" style="left:804.0px;top:1308px;width:460px;text-align:center;font-size:26.25px;color:#666">丘处机/42</div>
<div class="t" style="left:1268.0px;top:1308px;width:460px;text-align:center;font-size:26.25px;color:#666">无</div>
<div class="t" style="left:1761px;top:1280.2px;font-size:26.25px;color:#666">辣小酱贵州特产鸡肉脆哨油辣椒200g辣</div>
<div class="t" style="left:1761px;top:1335.8px;font-size:26.25px;color:#666">椒酱包邮香辣拌面酱拌饭酱 | ￥29.90×1</div>
<div class="t" style="left:2300.0px;top:1308px;width:460px;text-align:center;font-size:26.25px;color:#666">2021-09-09 21:21:35</div>
<div class="cb" style="top:1409px"></div>
<div class="t" style="left:601.5px;top:1414px;font-size:26.25px;color:#666">246</div>
<div class="t" style="left:804.0px;top:1414px;width:460px;text-align:center;font-size:26.25px;color:#666">bc36ab29e7bb/3</div>
<div class="t" style="left:1268.0px;top:1414px;width:460px;text-align:center;font-size:26.25px;color:#666">2f54ef169834/1</div>
<div class="t" style="left:1761px;top:1414px;font-size:26.25px;color:#666">2人团测试 | ￥10.00×1</div>
<div class="t" style="left:2300.0px;top:1414px;width:460px;text-align:center;font-size:26.25px;color:#666">2021-09-07 22:40:49</div>
<div class="cb" style="top:1487px"></div>
<div class="t" style="left:601.5px;top:1492px;font-size:26.25px;color:#666">245</div>
<div class="t" style="left:804.0px;top:1492px;width:460px;text-align:center;font-size:26.25px;color:#666">9b4ca6c0b7e3/50</div>
<div class="t" style="left:1268.0px;top:1492px;width:460px;text-align:center;font-size:26.25px;color:#666">无</div>
<div class="t" style="left:1761px;top:1492px;font-size:26.25px;color:#666">2人团测试 | ￥10.00×1</div>
<div class="t" style="left:2300.0px;top:1492px;width:460px;text-align:center;font-size:26.25px;color:#666">2021-09-07 22:40:34</div>
</body></html>
